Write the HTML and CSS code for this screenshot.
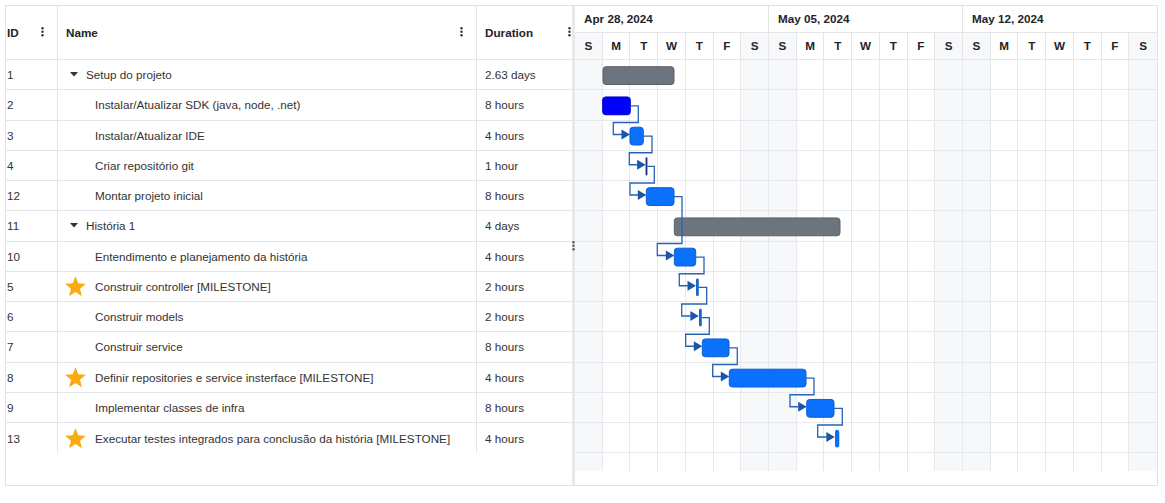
FILE: index.html
```html
<!DOCTYPE html>
<html lang="pt">
<head>
<meta charset="utf-8">
<title>Gantt</title>
<link rel="stylesheet" href="styles.css">
</head>
<body>
<div class="gantt">
  <div class="grid-pane">
    <div class="grid-head">
      <div class="hc c-id"><span>ID</span><svg class="kebab" width="3" height="10" viewBox="0 0 3 10"><circle cx="1.5" cy="1.3" r="1.2"/><circle cx="1.5" cy="4.8" r="1.2"/><circle cx="1.5" cy="8.3" r="1.2"/></svg></div>
      <div class="hc c-name"><span>Name</span><svg class="kebab" width="3" height="10" viewBox="0 0 3 10"><circle cx="1.5" cy="1.3" r="1.2"/><circle cx="1.5" cy="4.8" r="1.2"/><circle cx="1.5" cy="8.3" r="1.2"/></svg></div>
      <div class="hc c-dur"><span>Duration</span><svg class="kebab" width="3" height="10" viewBox="0 0 3 10"><circle cx="1.5" cy="1.3" r="1.2"/><circle cx="1.5" cy="4.8" r="1.2"/><circle cx="1.5" cy="8.3" r="1.2"/></svg></div>
    </div>
    <div class="grid-body">
      <div class="row"><div class="cell c-id">1</div><div class="cell c-name"><svg class="caret" width="8" height="5" viewBox="0 0 8 5"><polygon points="0,0 8,0 4,4.6"/></svg><span>Setup do projeto</span></div><div class="cell c-dur">2.63 days</div></div>
      <div class="row"><div class="cell c-id">2</div><div class="cell c-name"><span class="slot"></span><span>Instalar/Atualizar SDK (java, node, .net)</span></div><div class="cell c-dur">8 hours</div></div>
      <div class="row"><div class="cell c-id">3</div><div class="cell c-name"><span class="slot"></span><span>Instalar/Atualizar IDE</span></div><div class="cell c-dur">4 hours</div></div>
      <div class="row"><div class="cell c-id">4</div><div class="cell c-name"><span class="slot"></span><span>Criar repositório git</span></div><div class="cell c-dur">1 hour</div></div>
      <div class="row"><div class="cell c-id">12</div><div class="cell c-name"><span class="slot"></span><span>Montar projeto inicial</span></div><div class="cell c-dur">8 hours</div></div>
      <div class="row"><div class="cell c-id">11</div><div class="cell c-name"><svg class="caret" width="8" height="5" viewBox="0 0 8 5"><polygon points="0,0 8,0 4,4.6"/></svg><span>História 1</span></div><div class="cell c-dur">4 days</div></div>
      <div class="row"><div class="cell c-id">10</div><div class="cell c-name"><span class="slot"></span><span>Entendimento e planejamento da história</span></div><div class="cell c-dur">4 hours</div></div>
      <div class="row"><div class="cell c-id">5</div><div class="cell c-name"><span class="slot"><svg class="star" width="23" height="23" viewBox="0 0 24 24"><polygon points="12,1.2 14.9,8.7 22.8,9.2 16.7,14.3 18.7,22.2 12,17.8 5.3,22.2 7.3,14.3 1.2,9.2 9.1,8.7"/></svg></span><span>Construir controller [MILESTONE]</span></div><div class="cell c-dur">2 hours</div></div>
      <div class="row"><div class="cell c-id">6</div><div class="cell c-name"><span class="slot"></span><span>Construir models</span></div><div class="cell c-dur">2 hours</div></div>
      <div class="row"><div class="cell c-id">7</div><div class="cell c-name"><span class="slot"></span><span>Construir service</span></div><div class="cell c-dur">8 hours</div></div>
      <div class="row"><div class="cell c-id">8</div><div class="cell c-name"><span class="slot"><svg class="star" width="23" height="23" viewBox="0 0 24 24"><polygon points="12,1.2 14.9,8.7 22.8,9.2 16.7,14.3 18.7,22.2 12,17.8 5.3,22.2 7.3,14.3 1.2,9.2 9.1,8.7"/></svg></span><span>Definir repositories e service insterface [MILESTONE]</span></div><div class="cell c-dur">4 hours</div></div>
      <div class="row"><div class="cell c-id">9</div><div class="cell c-name"><span class="slot"></span><span>Implementar classes de infra</span></div><div class="cell c-dur">8 hours</div></div>
      <div class="row last"><div class="cell c-id">13</div><div class="cell c-name"><span class="slot"><svg class="star" width="23" height="23" viewBox="0 0 24 24"><polygon points="12,1.2 14.9,8.7 22.8,9.2 16.7,14.3 18.7,22.2 12,17.8 5.3,22.2 7.3,14.3 1.2,9.2 9.1,8.7"/></svg></span><span>Executar testes integrados para conclusão da história [MILESTONE]</span></div><div class="cell c-dur">4 hours</div></div>
    </div>
  </div>

  <div class="splitter"><svg class="kebab split-dots" width="3" height="10" viewBox="0 0 3 10"><circle cx="1.5" cy="1.3" r="1.2"/><circle cx="1.5" cy="4.8" r="1.2"/><circle cx="1.5" cy="8.3" r="1.2"/></svg></div>

  <div class="chart-pane">
    <div class="week-row">
      <div class="week">Apr 28, 2024</div>
      <div class="week">May 05, 2024</div>
      <div class="week">May 12, 2024</div>
    </div>
    <div class="day-row">
      <div class="day we">S</div><div class="day">M</div><div class="day">T</div><div class="day">W</div><div class="day">T</div><div class="day">F</div><div class="day we">S</div>
      <div class="day we">S</div><div class="day">M</div><div class="day">T</div><div class="day">W</div><div class="day">T</div><div class="day">F</div><div class="day we">S</div>
      <div class="day we">S</div><div class="day">M</div><div class="day">T</div><div class="day">W</div><div class="day">T</div><div class="day">F</div><div class="day we">S</div>
    </div>
    <div class="chart-body">
      <div class="cols">
        <div class="col we"></div><div class="col"></div><div class="col"></div><div class="col"></div><div class="col"></div><div class="col"></div><div class="col we"></div>
        <div class="col we"></div><div class="col"></div><div class="col"></div><div class="col"></div><div class="col"></div><div class="col"></div><div class="col we"></div>
        <div class="col we"></div><div class="col"></div><div class="col"></div><div class="col"></div><div class="col"></div><div class="col"></div><div class="col we"></div>
      </div>
      <div class="rows">
        <div></div><div></div><div></div><div></div><div></div><div></div><div></div><div></div><div></div><div></div><div></div><div></div><div></div>
      </div>
      <svg class="overlay" width="582" height="411" viewBox="0 0 582 411">
        <g class="bars">
          <rect class="summary" x="28" y="6.7" width="71" height="17.8" rx="3"/>
          <rect class="pure" x="27.7" y="36.95" width="27.6" height="17.8" rx="3"/>
          <rect class="task" x="55" y="67.2" width="13.3" height="17.8" rx="3"/>
          <rect class="navy" x="70.6" y="97.45" width="1.8" height="17.8"/>
          <rect class="task" x="71.3" y="127.7" width="27.7" height="17.8" rx="3"/>
          <rect class="summary" x="99.3" y="157.95" width="165.7" height="17.8" rx="3"/>
          <rect class="task" x="99.3" y="188.2" width="21.4" height="17.8" rx="3"/>
          <rect class="mid" x="121" y="218.45" width="2.8" height="17.8" rx="1.4"/>
          <rect class="mid" x="124" y="248.7" width="2.8" height="17.8" rx="1.4"/>
          <rect class="task" x="127.3" y="278.95" width="26.7" height="17.8" rx="3"/>
          <rect class="task" x="154.3" y="309.2" width="76.7" height="17.8" rx="3"/>
          <rect class="task" x="231.7" y="339.45" width="27.3" height="17.8" rx="3"/>
          <rect class="pill" x="260" y="369.7" width="4.3" height="17.8" rx="2.1"/>
        </g>
        <g class="links">
          <path d="M55.3 45.85 H63.3 V62.5 H38.3 V74.5 H47"/>
          <path d="M68.3 76.1 H77 V92.75 H54.3 V104.75 H62.5"/>
          <path d="M72.4 106.35 H79.3 V123 H55 V135 H63"/>
          <path d="M99 136.6 H107 V183.5 H82.3 V195.5 H91"/>
          <path d="M120.7 197.1 H129 V213.75 H104.3 V225.75 H112.7"/>
          <path d="M123.8 227.35 H131.7 V244 H106.7 V256 H115.5"/>
          <path d="M126.8 257.6 H134.3 V274.25 H110.7 V286.25 H119"/>
          <path d="M154 287.85 H162.3 V304.5 H137.7 V316.5 H146"/>
          <path d="M231 318.1 H239 V334.75 H215 V346.75 H223.3"/>
          <path d="M259 348.35 H267.3 V365 H242.7 V377 H251.5"/>
        </g>
        <g class="arrows">
          <polygon points="46.5,69.5 55,74.5 46.5,79.5"/>
          <polygon points="62.1,99.75 70.6,104.75 62.1,109.75"/>
          <polygon points="62.8,130 71.3,135 62.8,140"/>
          <polygon points="90.8,190.5 99.3,195.5 90.8,200.5"/>
          <polygon points="112.5,220.75 121,225.75 112.5,230.75"/>
          <polygon points="115.3,251 123.8,256 115.3,261"/>
          <polygon points="118.8,281.25 127.3,286.25 118.8,291.25"/>
          <polygon points="145.8,311.5 154.3,316.5 145.8,321.5"/>
          <polygon points="223.2,341.75 231.7,346.75 223.2,351.75"/>
          <polygon points="251.3,372 259.8,377 251.3,382"/>
        </g>
      </svg>
    </div>
  </div>
</div>
</body>
</html>
```

FILE: styles.css
```css
* {
  box-sizing: border-box;
}

body {
  margin: 0;
  padding: 5px;
  background: #ffffff;
  font-family: "Liberation Sans", Arial, sans-serif;
  font-size: 11.7px;
  color: #333333;
}

.gantt {
  display: flex;
  width: 1153px;
  height: 481px;
  border: 1px solid #dfe2e6;
  position: relative;
}

/* ---------- left grid ---------- */
.grid-pane {
  flex: none;
  width: 566px;
  overflow: hidden;
  display: flex;
  flex-direction: column;
}

.grid-head {
  display: flex;
  height: 54px;
  flex: none;
  border-bottom: 1px solid #e3e5e8;
}

.hc {
  display: flex;
  align-items: center;
  justify-content: space-between;
  padding-bottom: 1px;
  font-weight: bold;
  color: #212529;
}

.kebab {
  display: block;
  flex: none;
  fill: #333333;
}

.c-id {
  flex: none;
  width: 52px;
  padding-left: 1px;
  padding-right: 13px;
  border-right: 1px solid #e3e5e8;
}

.c-name {
  flex: none;
  width: 419px;
  padding-left: 8px;
  padding-right: 13px;
  border-right: 1px solid #e3e5e8;
}

.c-dur {
  flex: none;
  width: 106px;
  padding-left: 8px;
  padding-right: 12px;
}

.grid-body {
  display: flex;
  flex-direction: column;
}

.row {
  display: flex;
  height: 30.25px;
  flex: none;
  border-bottom: 1px solid #e3e5e8;
}

.row.last {
  border-bottom: none;
}

.cell {
  display: flex;
  align-items: center;
  white-space: nowrap;
}

.caret {
  display: block;
  flex: none;
  margin-left: 4px;
  margin-right: 8px;
  fill: #333333;
}

.slot {
  flex: none;
  width: 29px;
  height: 23px;
  display: flex;
  align-items: center;
}

.star {
  display: block;
  margin-left: -2px;
  fill: #f9ab0f;
}

/* ---------- splitter ---------- */
.splitter {
  flex: none;
  width: 3px;
  background: #e6e8eb;
  display: flex;
  align-items: center;
  justify-content: center;
}

.split-dots {
  fill: #555b62;
}

/* ---------- chart ---------- */
.chart-pane {
  flex: none;
  width: 582px;
  display: flex;
  flex-direction: column;
}

.week-row {
  display: flex;
  height: 27px;
  border-bottom: 1px solid #e3e5e8;
}

.week {
  width: 194px;
  flex: none;
  display: flex;
  align-items: center;
  padding-left: 9px;
  padding-bottom: 2px;
  border-right: 1px solid #e3e5e8;
  font-weight: bold;
  color: #212529;
}

.week:last-child {
  border-right: none;
}

.day-row {
  display: grid;
  grid-template-columns: repeat(21, 1fr);
  height: 27px;
  border-bottom: 1px solid #e3e5e8;
}

.day {
  display: flex;
  align-items: center;
  justify-content: center;
  padding-bottom: 2px;
  border-right: 1px solid #e3e5e8;
  font-weight: bold;
  color: #212529;
}

.day:last-child,
.col:last-child {
  border-right: none;
}

.day.we,
.col.we {
  background: #f7f8fa;
}

.chart-body {
  position: relative;
  height: 411px;
}

.cols {
  display: grid;
  grid-template-columns: repeat(21, 1fr);
  height: 100%;
}

.col {
  border-right: 1px solid #e6e8eb;
}

.rows {
  position: absolute;
  inset: 0;
}

.rows div {
  height: 30.25px;
  border-bottom: 1px solid #e6e8eb;
}

.overlay {
  position: absolute;
  top: 0;
  left: 0;
}

.summary {
  fill: #6c757d;
  stroke: #5a6168;
  stroke-width: 1;
}

.pure {
  fill: #0000ff;
  stroke: #0000c4;
  stroke-width: 1;
}

.task {
  fill: #0b70fb;
  stroke: #0a5ed6;
  stroke-width: 1;
}

.navy {
  fill: #1b2a86;
}

.mid {
  fill: #1766cc;
}

.pill {
  fill: #0b6ff2;
}

.links path {
  fill: none;
  stroke: #2762b4;
  stroke-width: 1.3;
}

.arrows polygon {
  fill: #1a56a8;
}
```
